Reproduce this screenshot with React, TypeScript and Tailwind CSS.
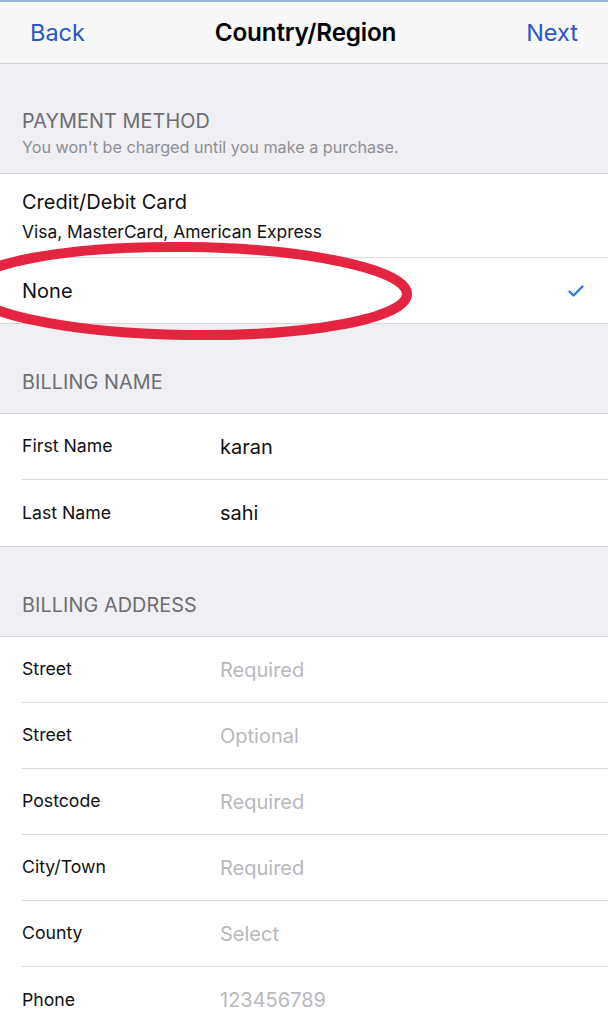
import React from 'react';

const font = { fontFamily: 'Inter, "Liberation Sans", sans-serif' };

function SectionHeader({ title, sub, tall }: { title: string; sub?: string; tall?: boolean }) {
  return (
    <div
      className={`flex flex-col justify-end bg-[#efeff4] px-[22px] border-b border-[#d6d6da] ${
        tall ? 'h-[110px] pb-[16px]' : 'h-[90px] pb-[19px]'
      }`}
    >
      <div className="text-[19.8px] leading-[24px] tracking-[0.1px] text-[#6d6d72]">{title}</div>
      {sub && <div className="mt-[4px] text-[16.2px] leading-[20px] text-[#8e8e93]">{sub}</div>}
    </div>
  );
}

function FieldRow({ label, value, placeholder, last }: { label: string; value: string; placeholder?: boolean; last?: boolean }) {
  return (
    <div className="pl-[22px] bg-white">
      <div className={`flex h-[66px] items-center ${last ? '' : 'border-b border-[#dcdce0]'}`}>
        <div className="w-[198px] text-[17.7px] text-[#111]">{label}</div>
        <div className={`text-[20px] ${placeholder ? 'text-[#b8b8bd]' : 'text-[#111]'}`}>{value}</div>
      </div>
    </div>
  );
}

export default function App() {
  return (
    <div className="relative w-[608px] h-[1024px] overflow-hidden bg-[#efeff4]" style={font}>
      {/* Nav bar */}
      <div className="h-[2px] bg-[#9ab8d6]" />
      <div className="flex h-[62px] items-center justify-between bg-[#f7f7f8] px-[30px] border-b border-[#d2d2d6]">
        <span className="text-[23.5px] text-[#2a56c6]">Back</span>
        <span className="text-[24.3px] font-semibold text-black tracking-[-0.2px]">Country/Region</span>
        <span className="text-[23.5px] text-[#2a56c6]">Next</span>
      </div>

      {/* Payment method */}
      <SectionHeader title="PAYMENT METHOD" sub="You won't be charged until you make a purchase." tall />
      <div className="bg-white border-b border-[#d6d6da]">
        <div className="pl-[22px]">
          <div className="flex h-[84px] flex-col justify-center border-b border-[#dcdce0]">
            <div className="text-[20px] text-[#111] leading-[24px]">Credit/Debit Card</div>
            <div className="mt-[8px] text-[17.4px] text-[#111] leading-[20px]">Visa, MasterCard, American Express</div>
          </div>
        </div>
        <div className="flex h-[65px] items-center justify-between pl-[22px] pr-[24px]">
          <span className="text-[20px] text-[#111]">None</span>
          <svg width="16" height="12" viewBox="0 0 16 12" fill="none">
            <path d="M1.5 6.5 L5.5 10.5 L14.5 1.5" stroke="#2f7bd8" strokeWidth="2.4" strokeLinecap="round" strokeLinejoin="round" />
          </svg>
        </div>
      </div>

      {/* Billing name */}
      <SectionHeader title="BILLING NAME" />
      <div className="border-b border-[#d6d6da]">
        <FieldRow label="First Name" value="karan" />
        <FieldRow label="Last Name" value="sahi" last />
      </div>

      {/* Billing address */}
      <SectionHeader title="BILLING ADDRESS" />
      <div>
        <FieldRow label="Street" value="Required" placeholder />
        <FieldRow label="Street" value="Optional" placeholder />
        <FieldRow label="Postcode" value="Required" placeholder />
        <FieldRow label="City/Town" value="Required" placeholder />
        <FieldRow label="County" value="Select" placeholder />
        <FieldRow label="Phone" value="123456789" placeholder last />
      </div>

      {/* Red hand-drawn circle annotation */}
      <svg className="pointer-events-none absolute left-0 top-0" width="608" height="400" viewBox="0 0 608 400">
        <ellipse cx="188" cy="291" rx="219" ry="44" fill="none" stroke="#e5253f" strokeWidth="10" transform="rotate(0.8 188 291)" />
      </svg>
    </div>
  );
}
